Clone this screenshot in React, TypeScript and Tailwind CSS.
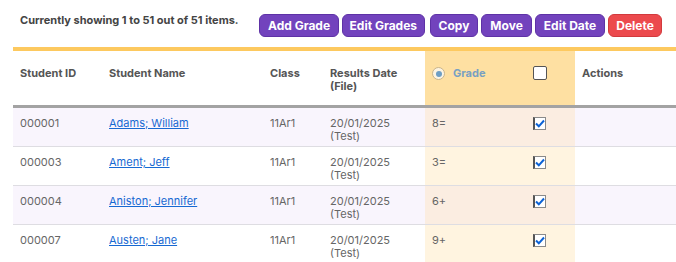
import React from 'react';

type Row = { id: string; name: string; cls: string; date: string; grade: string };

const rows: Row[] = [
  { id: '000001', name: 'Adams; William', cls: '11Ar1', date: '20/01/2025', grade: '8=' },
  { id: '000003', name: 'Ament; Jeff', cls: '11Ar1', date: '20/01/2025', grade: '3=' },
  { id: '000004', name: 'Aniston; Jennifer', cls: '11Ar1', date: '20/01/2025', grade: '6+' },
  { id: '000007', name: 'Austen; Jane', cls: '11Ar1', date: '20/01/2025', grade: '9+' },
];

function Btn({ label, red, className = '' }: { label: string; red?: boolean; className?: string }) {
  return (
    <button
      className={
        'h-[23px] shrink-0 whitespace-nowrap rounded-[6px] border text-[12px] font-bold leading-none text-white ' +
        (red ? 'border-[#d23a3d] bg-[#ec4a4d] ' : 'border-[#5e32a6] bg-[#7243bd] ') +
        className
      }
    >
      {label}
    </button>
  );
}

function CheckedBox() {
  return (
    <span className="inline-flex h-[13px] w-[13px] items-center justify-center border border-[#8a8a8a] border-l-2 border-l-[#555] bg-white">
      <svg width="10" height="9" viewBox="0 0 10 9">
        <path d="M1 4.5 L3.8 7.3 L9 1.5" fill="none" stroke="#0b62d6" strokeWidth="2" />
      </svg>
    </span>
  );
}

export default function App() {
  const th = 'pl-[7px] pr-[4px] pt-[16px] pb-[12px] text-left align-top font-bold text-[#555]';
  const td = 'pl-[7px] pr-[4px] pt-[9px] pb-[3px] align-top';

  return (
    <div className="px-[13px] font-['Inter',sans-serif] text-[11px] leading-[13px]">
      <div className="flex h-[47px] items-start">
        <div className="w-[246px] shrink-0 pl-[7px] pt-[14px] font-bold text-[#444]">
          Currently showing 1 to 51 out of 51 items.
        </div>
        <div className="flex shrink-0 pt-[14px]">
          <Btn label="Add Grade" className="px-[8px]" />
          <Btn label="Edit Grades" className="ml-[3px] px-[6.5px]" />
          <Btn label="Copy" className="ml-[5px] px-[8px]" />
          <Btn label="Move" className="ml-[3px] px-[8px]" />
          <Btn label="Edit Date" className="ml-[3px] px-[8px]" />
          <Btn label="Delete" red className="ml-[3px] px-[7px]" />
        </div>
      </div>

      <table className="w-[663px] table-fixed border-collapse border-t-4 border-[#fdc95f]">
        <colgroup>
          <col className="w-[89px]" />
          <col className="w-[161px]" />
          <col className="w-[60px]" />
          <col className="w-[102px]" />
          <col className="w-[90px]" />
          <col className="w-[60px]" />
          <col className="w-[101px]" />
        </colgroup>
        <thead>
          <tr className="border-b-[3px] border-[#a3a3a3]">
            <th className={th}>Student ID</th>
            <th className={th}>Student Name</th>
            <th className={th}>Class</th>
            <th className={th}>
              Results Date
              <br />
              (File)
            </th>
            <th className={th + ' bg-[#fee0a2]'}>
              <span className="flex items-center">
                <span className="mr-[8px] inline-flex h-[13px] w-[13px] items-center justify-center rounded-full border border-[#c8b48c] bg-[#fdf4e2]">
                  <span className="h-[6px] w-[6px] rounded-full bg-[#6e9ec4]" />
                </span>
                <span className="text-[#79a0c2]">Grade</span>
              </span>
            </th>
            <th className="bg-[#fee0a2] pt-[15px] pl-[18px] text-left align-top">
              <span className="block h-[14px] w-[14px] rounded-[2px] border-[1.5px] border-[#555] bg-white" />
            </th>
            <th className={th}>Actions</th>
          </tr>
        </thead>
        <tbody className="text-[#666]">
          {rows.map((r, i) => {
            const odd = i % 2 === 0;
            return (
              <tr key={r.id} className={'h-[39px] border-b border-[#dedde2] ' + (odd ? 'bg-[#f9f5fd]' : 'bg-white')}>
                <td className={td}>{r.id}</td>
                <td className={td}>
                  <a href="#" className="text-[#1769d2] underline">
                    {r.name}
                  </a>
                </td>
                <td className={td}>{r.cls}</td>
                <td className={td}>
                  {r.date}
                  <br />
                  (Test)
                </td>
                <td className={td + (odd ? ' bg-[#fbede1]' : ' bg-[#fff4e0]')}>{r.grade}</td>
                <td className={'pt-[9px] pl-[18px] align-top' + (odd ? ' bg-[#fbede1]' : ' bg-[#fff4e0]')}>
                  <CheckedBox />
                </td>
                <td className={td}></td>
              </tr>
            );
          })}
        </tbody>
      </table>
    </div>
  );
}
